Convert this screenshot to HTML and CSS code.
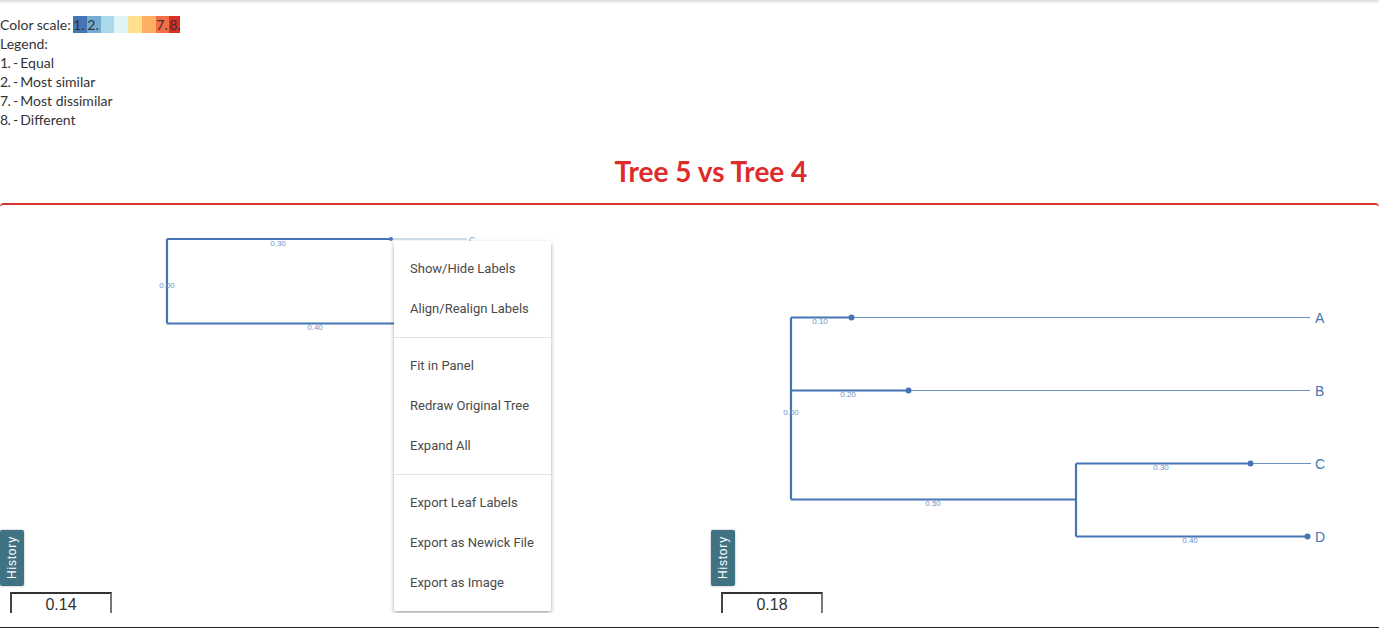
FILE: index.html
```html
<!DOCTYPE html>
<html lang="en">
<head>
    <meta charset="UTF-8">
    <title>Tree 5 vs Tree 4</title>
    <link rel="stylesheet" href="styles.css">
</head>
<body>
<div class="top-shadow"></div>

<!-- Legend -->
<div class="legend">
    <div>Color scale: <span class="scale"><span class="c1">1.</span><span class="c2">2.</span><span class="c3"></span><span class="c4"></span><span class="c5"></span><span class="c6"></span><span class="c7">7.</span><span class="c8">8.</span></span></div>
    <div>Legend:</div>
    <div><span class="key">1. - </span>Equal</div>
    <div><span class="key">2. - </span>Most similar</div>
    <div><span class="key">7. - </span>Most dissimilar</div>
    <div><span class="key">8. - </span>Different</div>
</div>

<h1 class="title">Tree 5 vs Tree 4</h1>

<div class="compare">
    <!-- Left tree -->
    <div class="panel">
        <svg class="tree" width="711" height="408" viewBox="0 0 711 408">
            <path class="branch" d="M167 34V118.500M167 34H391M167 118.500H400"/>
            <path class="ext-light" d="M391 34H467"/>
            <circle class="node" cx="391" cy="34" r="2"/>
            <text class="len" x="278" y="41" text-anchor="middle">0.30</text>
            <text class="len" x="167" y="83" text-anchor="middle">0.00</text>
            <text class="len" x="315" y="125" text-anchor="middle">0.40</text>
            <text class="leaf-small" x="469" y="38">C</text>
        </svg>
        <div class="history">History</div>
        <div class="scale-box">0.14</div>

        <ul class="menu">
            <li>Show/Hide Labels</li>
            <li class="sep-after">Align/Realign Labels</li>
            <li>Fit in Panel</li>
            <li>Redraw Original Tree</li>
            <li class="sep-after">Expand All</li>
            <li>Export Leaf Labels</li>
            <li>Export as Newick File</li>
            <li>Export as Image</li>
        </ul>
    </div>

    <!-- Right tree -->
    <div class="panel">
        <svg class="tree" width="668" height="408" viewBox="711 0 668 408">
            <path class="branch" d="M791 112.500V294.500M791 112.500H851M791 185.500H908M791 294.500H1076M1076 258.500V331.500M1076 258.500H1250M1076 331.500H1307"/>
            <path class="ext" d="M851 112.500H1310M908 185.500H1310M1250 258.500H1311"/>
            <circle class="node" cx="851.500" cy="112.500" r="3"/>
            <circle class="node" cx="908.500" cy="185.500" r="3"/>
            <circle class="node" cx="1250.500" cy="258.500" r="3"/>
            <circle class="node" cx="1307.500" cy="331.500" r="3"/>
            <text class="len" x="820" y="119" text-anchor="middle">0.10</text>
            <text class="len" x="848" y="192" text-anchor="middle">0.20</text>
            <text class="len" x="791" y="210" text-anchor="middle">0.00</text>
            <text class="len" x="1161" y="265" text-anchor="middle">0.30</text>
            <text class="len" x="933" y="301" text-anchor="middle">0.50</text>
            <text class="len" x="1190" y="338" text-anchor="middle">0.40</text>
            <text class="leaf" x="1315" y="118">A</text>
            <text class="leaf" x="1315" y="191">B</text>
            <text class="leaf" x="1315" y="264">C</text>
            <text class="leaf" x="1315" y="337">D</text>
        </svg>
        <div class="history">History</div>
        <div class="scale-box">0.18</div>
    </div>
</div>

<div class="bottom-line"></div>
</body>
</html>
```

FILE: styles.css
```css
html, body {
    margin: 0;
    padding: 0;
    background: white;
    overflow: hidden;
}

body {
    font-family: "Lato", sans-serif;
    font-size: 14px;
    line-height: 19px;
    color: #333;
}

.top-shadow {
    height: 1px;
    background: #e0e0e0;
    box-shadow: 0 1px 2px rgba(0, 0, 0, 0.2);
}

.legend {
    padding-top: 14px;
}

.key {
    letter-spacing: -0.7px;
}

.scale {
    display: inline-flex;
    margin-left: -1px;
}

.scale span {
    display: block;
    height: 17px;
    line-height: 17px;
    margin-top: 1px;
    width: 14px;
}

.c1 { background: #4575b4; }
.c2 { background: #74add1; }
.c3 { background: #abd9e9; width: 13px !important; }
.c4 { background: #e0f3f8; width: 14px !important; }
.c5 { background: #fee090; }
.c6 { background: #fdae61; }
.c7 { background: #f46d43; width: 13px !important; }
.c8 { background: #d73027; width: 11px !important; }

.title {
    margin: 24px 0 14px;
    padding-left: 43px;
    text-align: center;
    font-size: 28px;
    line-height: 36px;
    font-weight: 700;
    color: #dd2c2a;
}

.compare {
    display: flex;
    height: 408px;
    border-top: 2px solid #d9322e;
    border-radius: 4px 4px 0 0;
}

.panel {
    position: relative;
    width: 711px;
    height: 408px;
}

.panel:last-child {
    width: 668px;
}

.tree {
    display: block;
}

.branch {
    fill: none;
    stroke: #4575b4;
    stroke-width: 2.2px;
}

.ext {
    fill: none;
    stroke: #4575b4;
    stroke-width: 1px;
    opacity: 0.8;
}

.ext-light {
    fill: none;
    stroke: #c3d2e6;
    stroke-width: 1.5px;
}

.node {
    fill: #4575b4;
}

.len {
    font-family: "Liberation Sans", sans-serif;
    font-size: 8px;
    fill: #6f90c8;
}

.leaf {
    font-family: "Liberation Sans", sans-serif;
    font-size: 14px;
    fill: #4575b4;
}

.leaf-small {
    font-family: "Liberation Sans", sans-serif;
    font-size: 9px;
    fill: #7f9fd0;
}

.history {
    position: absolute;
    left: 0;
    top: 325px;
    width: 24px;
    height: 56px;
    box-sizing: border-box;
    writing-mode: vertical-rl;
    transform: rotate(180deg);
    text-align: center;
    line-height: 24px;
    font-family: "Liberation Sans", sans-serif;
    font-size: 12px;
    letter-spacing: 0.8px;
    color: white;
    background: #3f7282;
    border-radius: 2px;
    box-shadow: 0 0 2px rgba(0, 0, 0, 0.4);
}

.scale-box {
    position: absolute;
    left: 10px;
    top: 387px;
    width: 98px;
    height: 19px;
    border: 2px solid #333;
    border-bottom: none;
    border-right-color: #777;
    border-left-color: #444;
    text-align: center;
    font-family: "Liberation Sans", sans-serif;
    font-size: 16px;
    line-height: 21px;
    color: #333;
}

.menu {
    position: absolute;
    left: 394px;
    top: 36px;
    width: 157px;
    margin: 0;
    padding: 8px 0;
    list-style: none;
    background: white;
    border-radius: 2px;
    box-shadow: 0 2px 4px rgba(0, 0, 0, 0.35);
    font-family: "Roboto", sans-serif;
    font-size: 13px;
    color: #4a4a4a;
}

.menu li {
    height: 40px;
    line-height: 40px;
    padding-left: 16px;
    white-space: nowrap;
}

.menu .sep-after {
    margin-bottom: 8px;
    padding-bottom: 8px;
    border-bottom: 1px solid #e2e2e2;
}

.bottom-line {
    position: absolute;
    left: 0;
    right: 0;
    top: 627px;
    height: 1px;
    background: #222;
}
```
